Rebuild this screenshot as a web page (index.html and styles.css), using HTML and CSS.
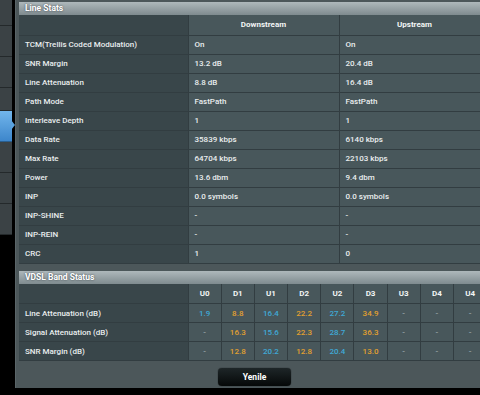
FILE: index.html
```html
<!DOCTYPE html>
<html>
<head>
<meta charset="utf-8">
<link rel="stylesheet" href="styles.css">
</head>
<body>
<div class="screen">
  <nav class="sidenav">
    <div class="nav-item first"></div>
    <div class="nav-item"></div>
    <div class="nav-item"></div>
    <div class="nav-item short"></div>
    <div class="nav-item active"><span class="arrow"></span></div>
    <div class="nav-item"></div>
    <div class="nav-item"></div>
    <div class="nav-item"></div>
  </nav>
  <main class="panel">
    <div class="section-title">Line Stats</div>
    <table class="stats">
      <colgroup><col class="c-label"><col class="c-val"><col class="c-val"></colgroup>
      <thead>
        <tr><th class="lbl"></th><th>Downstream</th><th>Upstream</th></tr>
      </thead>
      <tbody>
        <tr><td class="lbl">TCM(Trellis Coded Modulation)</td><td>On</td><td>On</td></tr>
        <tr><td class="lbl">SNR Margin</td><td>13.2 dB</td><td>20.4 dB</td></tr>
        <tr><td class="lbl">Line Attenuation</td><td>8.8 dB</td><td>16.4 dB</td></tr>
        <tr><td class="lbl">Path Mode</td><td>FastPath</td><td>FastPath</td></tr>
        <tr><td class="lbl">Interleave Depth</td><td>1</td><td>1</td></tr>
        <tr><td class="lbl">Data Rate</td><td>35839 kbps</td><td>6140 kbps</td></tr>
        <tr><td class="lbl">Max Rate</td><td>64704 kbps</td><td>22103 kbps</td></tr>
        <tr><td class="lbl">Power</td><td>13.6 dbm</td><td>9.4 dbm</td></tr>
        <tr><td class="lbl">INP</td><td>0.0 symbols</td><td>0.0 symbols</td></tr>
        <tr><td class="lbl">INP-SHINE</td><td>-</td><td>-</td></tr>
        <tr><td class="lbl">INP-REIN</td><td>-</td><td>-</td></tr>
        <tr><td class="lbl">CRC</td><td>1</td><td>0</td></tr>
      </tbody>
    </table>

    <div class="section-title second">VDSL Band Status</div>
    <table class="band">
      <colgroup><col class="c-label"><col span="9" class="c-band"></colgroup>
      <thead>
        <tr><th class="lbl"></th><th>U0</th><th>D1</th><th>U1</th><th>D2</th><th>U2</th><th>D3</th><th>U3</th><th>D4</th><th>U4</th></tr>
      </thead>
      <tbody>
        <tr><td class="lbl">Line Attenuation (dB)</td><td class="up">1.9</td><td class="dn">8.8</td><td class="up">16.4</td><td class="dn">22.2</td><td class="up">27.2</td><td class="dn">34.9</td><td class="na">-</td><td class="na">-</td><td class="na">-</td></tr>
        <tr><td class="lbl">Signal Attenuation (dB)</td><td class="na">-</td><td class="dn">16.3</td><td class="up">15.6</td><td class="dn">22.3</td><td class="up">28.7</td><td class="dn">36.3</td><td class="na">-</td><td class="na">-</td><td class="na">-</td></tr>
        <tr><td class="lbl">SNR Margin (dB)</td><td class="na">-</td><td class="dn">12.8</td><td class="up">20.2</td><td class="dn">12.8</td><td class="up">20.4</td><td class="dn">13.0</td><td class="na">-</td><td class="na">-</td><td class="na">-</td></tr>
      </tbody>
    </table>

    <div class="actions">
      <button class="btn">Yenile</button>
    </div>
  </main>
</div>
</body>
</html>
```
FILE: styles.css
```css
* { box-sizing: border-box; }
html, body { margin: 0; padding: 0; background: #000; }
body {
  width: 480px;
  height: 395px;
  overflow: hidden;
  font-family: Roboto, "Liberation Sans", Arial, sans-serif;
  font-size: 8px;
  font-weight: 500;
  color: #eaeeef;
}
.screen {
  display: flex;
  gap: 3px;
  height: 388px;
}
.sidenav {
  width: 12px;
  flex: none;
  display: flex;
  flex-direction: column;
}
.nav-item {
  height: 31px;
  background: #3b4245;
  border-bottom: 1px solid #24292b;
  position: relative;
}
.nav-item.first { height: 26px; }
.nav-item.short { height: 23px; }
.nav-item.active {
  background: linear-gradient(#72b6ec, #3d86cb);
  border-bottom-color: #2a5f90;
}
.nav-item .arrow {
  position: absolute;
  right: -3px;
  top: 9px;
  width: 0;
  height: 0;
  border-top: 5px solid transparent;
  border-bottom: 5px solid transparent;
  border-left: 4px solid #5aa2de;
}
.panel {
  flex: 1;
  min-width: 0;
  overflow: hidden;
  background: #4c575a;
  border-left: 1px solid #5a6568;
  padding: 2px 0 0 3px;
  display: flex;
  flex-direction: column;
}
.section-title {
  height: 13px;
  line-height: 13px;
  padding-left: 6px;
  width: 480px;
  background: linear-gradient(#aeb8bb, #7f8b8f);
  color: #fff;
  font-weight: bold;
  font-size: 8.5px;
  text-shadow: 0 0 2px #333c40;
}
.section-title.second { margin-top: 7px; }
table {
  border-collapse: collapse;
  table-layout: fixed;
  flex: none;
}
.stats { width: 471px; }
.band { width: 468px; }
col.c-label { width: 169px; }
col.c-val { width: 151px; }
col.c-band { width: 33.2px; }
th, td {
  height: 19px;
  padding: 0 0 0 6px;
  text-align: left;
  background: #48575b;
  border-bottom: 1px solid #323d41;
  border-right: 1px solid #323d41;
  white-space: nowrap;
  overflow: hidden;
}
th {
  font-weight: bold;
  text-align: center;
  padding: 0;
  height: 20px;
  color: #f2f5f5;
}
.lbl {
  background: #39464a;
  padding-left: 6px;
  text-align: left;
}
.band td { text-align: center; padding: 0; }
.band td.lbl { text-align: left; padding-left: 6px; }
.up { color: #3fa9d6; }
.dn { color: #e2a030; }
.na { color: #9aa6a9; }
.actions {
  flex: 1;
  width: 471px;
  display: flex;
  justify-content: center;
  align-items: flex-start;
  padding-top: 7px;
}
.btn {
  width: 73px;
  height: 18px;
  border: none;
  border-radius: 4px;
  background: linear-gradient(#1e2628, #050808);
  color: #fff;
  font-family: Roboto, "Liberation Sans", Arial, sans-serif;
  font-weight: bold;
  font-size: 8.5px;
  padding: 0;
  box-shadow: 0 0 1px #000;
}
```
